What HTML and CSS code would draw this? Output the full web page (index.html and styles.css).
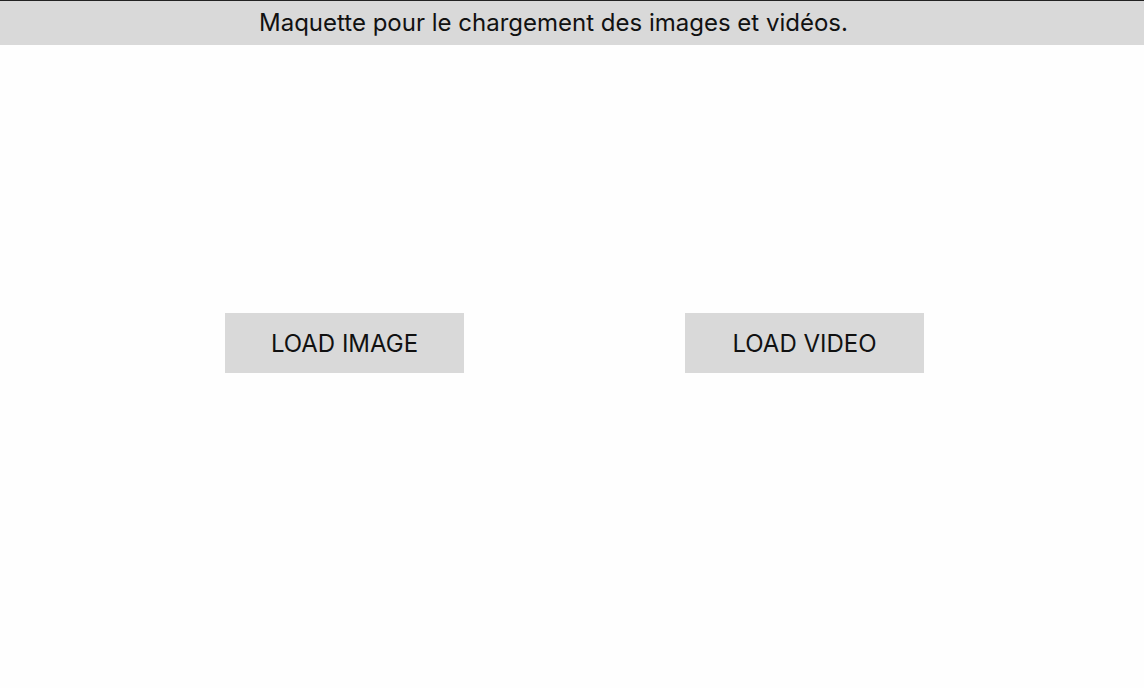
FILE: index.html
```html
<!DOCTYPE html>
<html lang="fr">
<head>
<meta charset="utf-8">
<title>Maquette</title>
<link rel="stylesheet" href="styles.css">
</head>
<body>
<header class="topbar">
  <h1 class="title">Maquette pour le chargement des images et vidéos.</h1>
</header>
<main class="actions">
  <button class="load-btn" type="button">LOAD IMAGE</button>
  <button class="load-btn" type="button">LOAD VIDEO</button>
</main>
</body>
</html>
```
FILE: styles.css
```css
html, body {
  margin: 0;
  padding: 0;
  background: #fefefe;
  font-family: Inter, "Noto Sans", sans-serif;
  color: #111;
}
.topbar {
  border-top: 1px solid #222;
  background: #d9d9d9;
  height: 44px;
  display: flex;
  align-items: center;
  padding-left: 259px;
}
.title {
  margin: 0;
  font-size: 24px;
  font-weight: 400;
  line-height: 44px;
  color: #111;
}
.actions {
  display: flex;
  gap: 221px;
  padding-left: 225px;
  padding-top: 268px;
}
.load-btn {
  width: 239px;
  height: 60px;
  border: none;
  background: #d9d9d9;
  font-family: Inter, "Noto Sans", sans-serif;
  font-size: 24px;
  font-weight: 400;
  color: #111;
  padding: 0;
  cursor: pointer;
}
```
